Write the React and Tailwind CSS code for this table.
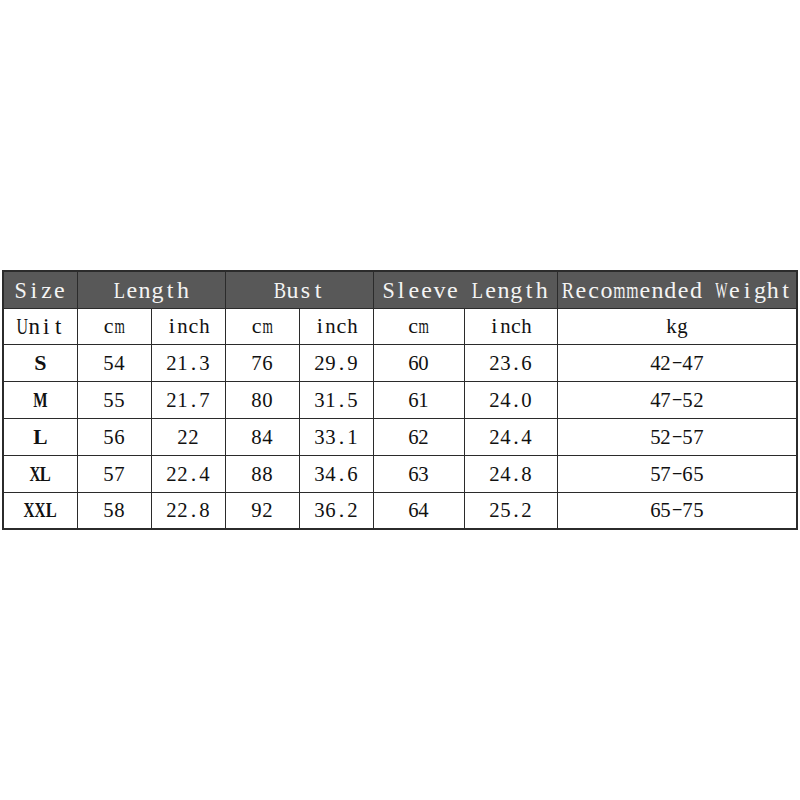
const rows = [
  ['S', '54', '21.3', '76', '29.9', '60', '23.6', '42-47'],
  ['M', '55', '21.7', '80', '31.5', '61', '24.0', '47-52'],
  ['L', '56', '22', '84', '33.1', '62', '24.4', '52-57'],
  ['XL', '57', '22.4', '88', '34.6', '63', '24.8', '57-65'],
  ['XXL', '58', '22.8', '92', '36.2', '64', '25.2', '65-75'],
];

const widths = [74, 74, 74, 74, 74, 91, 93, 240];

// rough advance widths (em) of Liberation Serif, used to squeeze wide glyphs into a mono slot
const adv = {
  a: 0.444, b: 0.5, c: 0.444, d: 0.5, e: 0.444, g: 0.5, h: 0.5, i: 0.278, k: 0.5,
  l: 0.278, m: 0.778, n: 0.5, o: 0.5, s: 0.389, t: 0.278, u: 0.5, v: 0.5, z: 0.444,
  B: 0.667, L: 0.667, M: 0.944, R: 0.667, S: 0.556, U: 0.722, W: 0.944, X: 0.722,
  '.': 0.25, '\u2212': 0.564,
};

const Mono = ({ text, slot, size, bold, fit = 0.96 }) => (
  <span className="inline-flex justify-center whitespace-nowrap">
    {text.split('').map((ch, i) => {
      const g = ch === '-' ? '\u2212' : ch;
      const w = (adv[g] ?? 0.5) * size;
      const sx = Math.min(1, (slot * fit) / w);
      return (
        <span key={i} className="inline-flex justify-center" style={{ width: slot }}>
          <span className={`inline-block ${bold ? 'font-bold' : ''}`} style={{ transform: `scaleX(${sx})` }}>
            {g === ' ' ? '\u00a0' : g}
          </span>
        </span>
      );
    })}
  </span>
);

const Head = ({ text, span = 1 }) => (
  <th colSpan={span} className="border border-[#2b2b2b] font-normal text-center">
    <Mono text={text} slot={12.8} size={24} />
  </th>
);

const Cell = ({ text, first }) => (
  <td className="border border-[#2b2b2b] text-center">
    {first ? (
      <Mono text={text} slot={11} size={22} bold fit={text.length === 1 ? 1.3 : 1.0} />
    ) : (
      <Mono text={text} slot={10.8} size={22} />
    )}
  </td>
);

export default function App() {
  return (
    <div className="h-[800px] w-[800px] bg-white flex items-center pl-[2px] font-['Liberation_Serif',serif]">
      <table className="border-collapse border-2 border-[#2b2b2b] table-fixed w-[794px]">
        <colgroup>
          {widths.map((w, i) => (
            <col key={i} style={{ width: w }} />
          ))}
        </colgroup>
        <thead>
          <tr className="h-[37px] bg-[#585858] text-[#f4f4f4] text-[24px] leading-none">
            <Head text="Size" />
            <Head text="Length" span={2} />
            <Head text="Bust" span={2} />
            <Head text="Sleeve Length" span={2} />
            <Head text="Recommended Weight" />
          </tr>
        </thead>
        <tbody className="text-[22px] leading-none text-[#111]">
          <tr className="h-[36px]">
            <td className="border border-[#2b2b2b] text-center text-[23px]">
              <Mono text="Unit" slot={12} size={23} />
            </td>
            {['cm', 'inch', 'cm', 'inch', 'cm', 'inch', 'kg'].map((u, i) => (
              <Cell key={i} text={u} />
            ))}
          </tr>
          {rows.map((r) => (
            <tr key={r[0]} className="h-[37px]">
              {r.map((c, i) => (
                <Cell key={i} text={c} first={i === 0} />
              ))}
            </tr>
          ))}
        </tbody>
      </table>
    </div>
  );
}
